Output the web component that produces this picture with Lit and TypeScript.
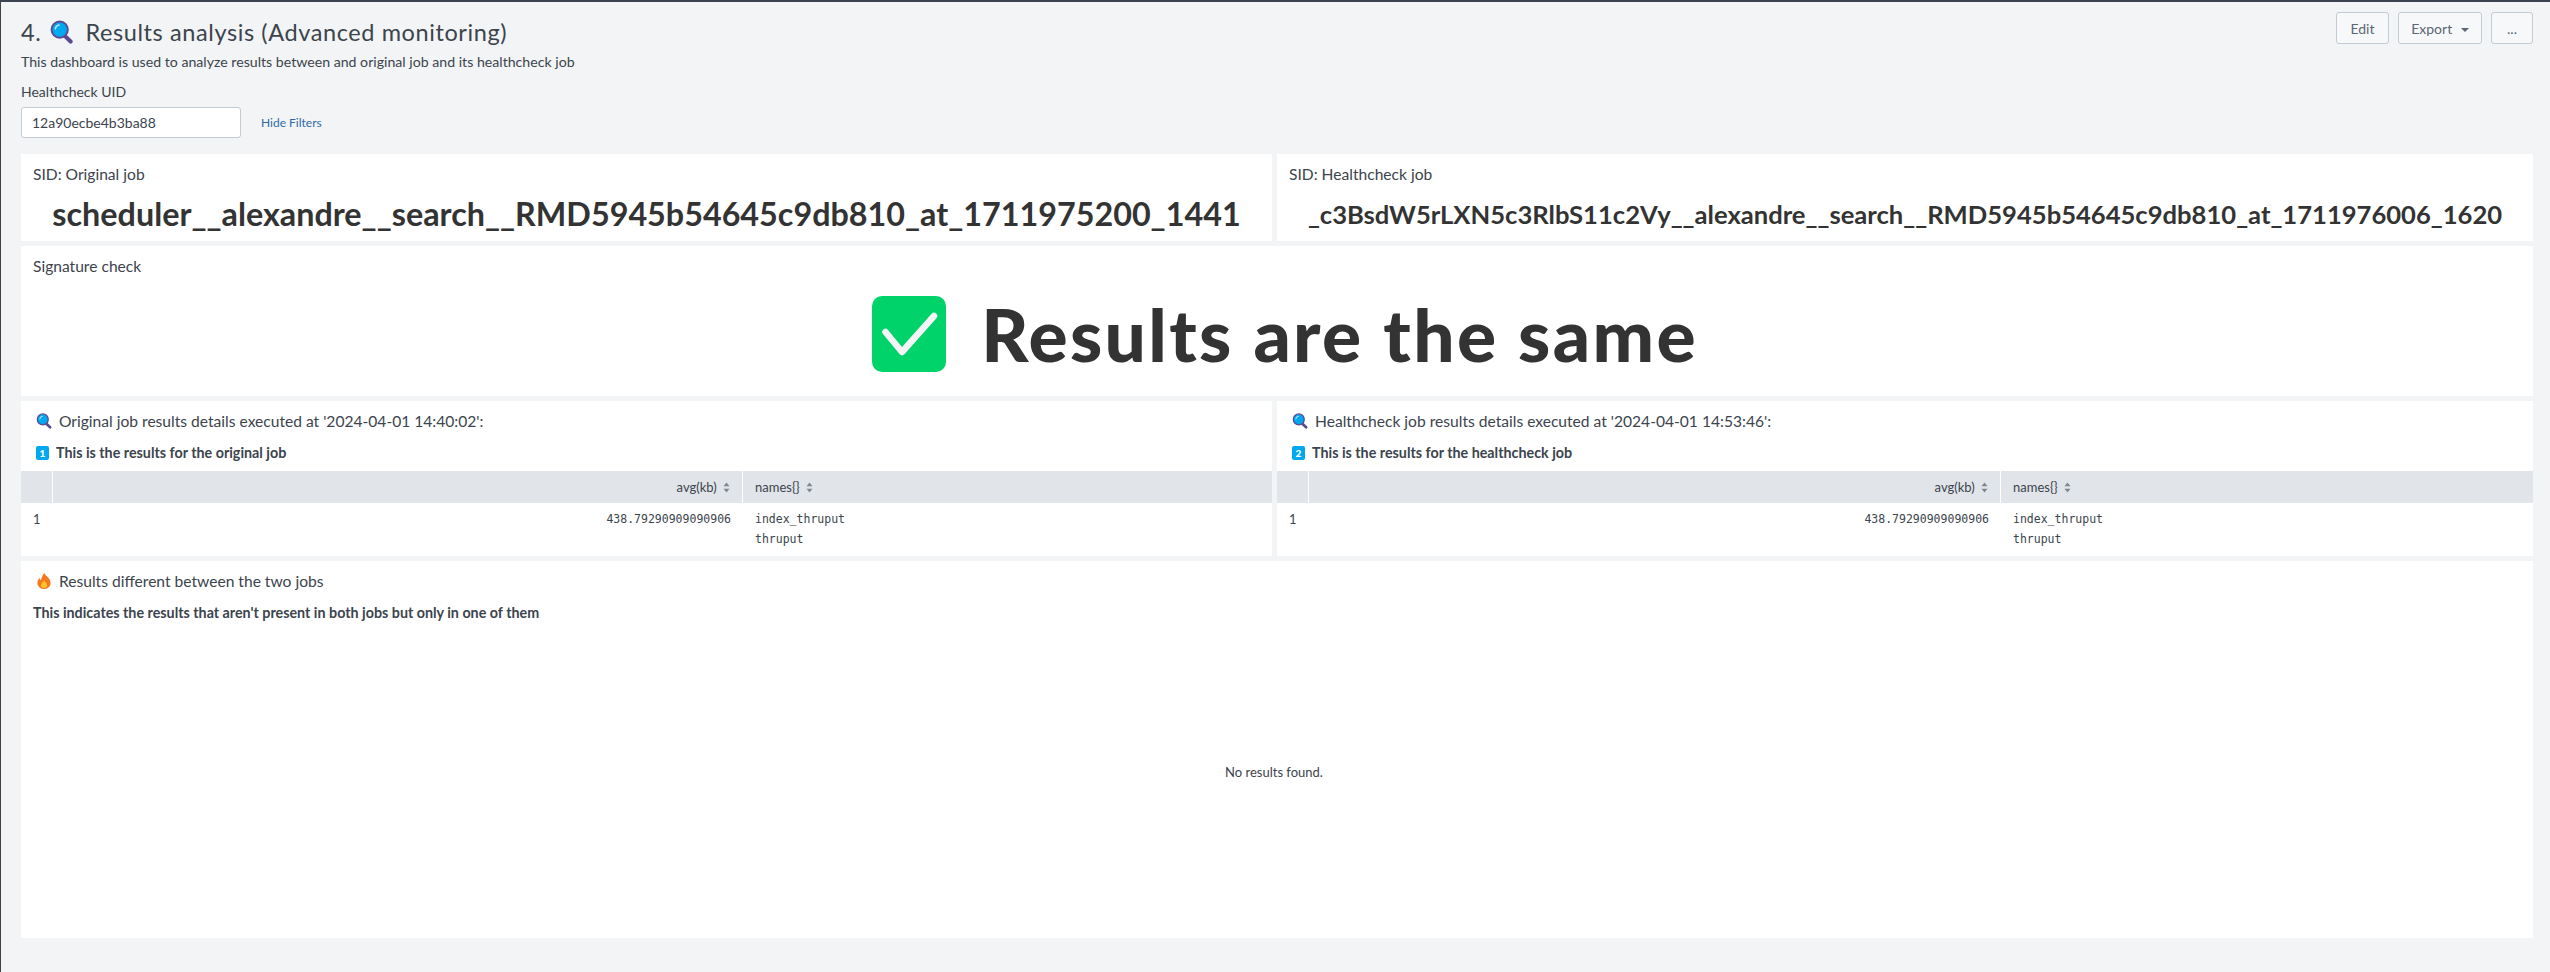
import { LitElement, css, html, svg } from 'lit'
import { customElement } from 'lit/decorators.js'

const magnifier = svg`
  <svg class="ico" viewBox="0 0 20 20">
    <path d="M12 12.5l5.6 5.4" stroke="#5c4b94" stroke-width="3.4" stroke-linecap="round" fill="none"/>
    <circle cx="8.5" cy="8" r="6.8" fill="#00a8f0" stroke="#5c4b94" stroke-width="1.6"/>
    <path d="M4.8 7.4a3.8 3.8 0 0 1 3.2-3.2" stroke="#b6e6fb" stroke-width="1.3" stroke-linecap="round" fill="none"/>
  </svg>`

const flame = svg`
  <svg class="ico flame" viewBox="0 0 14 16">
    <path d="M7.4 0c.4 2.700 6.200 4.800 6.200 10 0 3.500-2.900 6-6.600 6S.4 13.500.4 10.100c0-2.300 1.200-3.900 2.400-5 .2 1.100.6 1.900 1.300 2.300C4.300 4.600 5.600 2 7.400 0z" fill="#f4791f"/>
    <path d="M7.200 7.200c.4 1.500 3 2.500 3 5 0 1.800-1.400 2.900-3.200 2.900s-3.200-1.100-3.200-2.800c0-2.100 2.500-3.100 3.400-5.100z" fill="#ffc02e"/>
  </svg>`

const keycap = (n: string) => html`<span class="keycap">${n}</span>`

const sortIcon = svg`
  <svg class="sort" viewBox="0 0 7 11">
    <path d="M3.500 .5l3 3.800h-6z" fill="#7c8791"/>
    <path d="M3.500 10.500l-3-3.800h6z" fill="#7c8791"/>
  </svg>`

@customElement('app-root')
export class AppRoot extends LitElement {
  private resultTable(extra = '') {
    return html`
      <div class="table ${extra}">
        <div class="th"></div>
        <div class="th right">avg(kb) ${sortIcon}</div>
        <div class="th names">names{} ${sortIcon}</div>
        <div class="td">1</div>
        <div class="td mono right">438.79290909090906</div>
        <div class="td mono">
          <div>index_thruput</div>
          <div>thruput</div>
        </div>
      </div>
    `
  }

  render() {
    return html`
      <div class="head">
        <div>
          <h1>4. ${magnifier} <span>Results analysis (Advanced monitoring)</span></h1>
          <p class="desc">This dashboard is used to analyze results between and original job and its healthcheck job</p>
        </div>
        <div class="actions">
          <button class="edit">Edit</button>
          <button class="export">Export <i class="caret"></i></button>
          <button class="more">...</button>
        </div>
      </div>

      <div class="filters">
        <label>Healthcheck UID</label>
        <div class="filter-row">
          <div class="input">12a90ecbe4b3ba88</div>
          <a>Hide Filters</a>
        </div>
      </div>

      <div class="grid">
        <section>
          <div class="title">SID: Original job</div>
          <div class="big">scheduler__alexandre__search__RMD5945b54645c9db810_at_1711975200_1441</div>
        </section>
        <section>
          <div class="title">SID: Healthcheck job</div>
          <div class="big small">_c3BsdW5rLXN5c3RlbS11c2Vy__alexandre__search__RMD5945b54645c9db810_at_1711976006_1620</div>
        </section>

        <section class="wide">
          <div class="title">Signature check</div>
          <div class="verdict">
            <svg class="tick" viewBox="0 0 74 76">
              <rect width="74" height="76" rx="10" fill="#00d36a"/>
              <path d="M13.500 36L30 56 62 20" fill="none" stroke="#f2f4f5" stroke-width="6.500" stroke-linecap="round" stroke-linejoin="round"/>
            </svg>
            <span>Results are the same</span>
          </div>
        </section>

        <section>
          <div class="title indent">${magnifier} Original job results details executed at '2024-04-01 14:40:02':</div>
          <div class="note indent">${keycap('1')} This is the results for the original job</div>
          ${this.resultTable()}
        </section>
        <section>
          <div class="title indent">${magnifier} Healthcheck job results details executed at '2024-04-01 14:53:46':</div>
          <div class="note indent">${keycap('2')} This is the results for the healthcheck job</div>
          ${this.resultTable('wider')}
        </section>

        <section class="wide">
          <div class="title indent">${flame} Results different between the two jobs</div>
          <div class="note">This indicates the results that aren't present in both jobs but only in one of them</div>
          <div class="empty">No results found.</div>
        </section>
      </div>
    `
  }

  static styles = css`
    :host {
      display: block;
      box-sizing: border-box;
      height: 972px;
      background: #f2f4f5;
      border-top: 2px solid #3c444d;
      border-left: 1px solid #3c444d;
      padding: 0 17px 0 20px;
      font-family: Lato, 'Open Sans', sans-serif;
      color: #3c444d;
      font-size: 12px;
    }
    * {
      box-sizing: border-box;
    }
    .head {
      display: flex;
      justify-content: space-between;
      height: 82px;
      padding-top: 10px;
    }
    h1 {
      margin: 4px 0 0;
      height: 32px;
      display: flex;
      align-items: center;
      gap: 7px;
      font-size: 23.5px;
      font-weight: 400;
      letter-spacing: 0.6px;
    }
    h1 .ico {
      width: 25px;
      height: 24px;
      margin: 0 4px 0 1px;
    }
    .desc {
      margin: 6px 0 0;
      font-size: 14.15px;
      line-height: 16px;
    }
    .actions {
      display: flex;
      gap: 9px;
    }
    button {
      height: 32px;
      background: #f7f8fa;
      border: 1px solid #c3cbd4;
      border-radius: 3px;
      color: #5c6773;
      font: inherit;
      font-size: 14px;
      padding: 0;
    }
    .edit {
      width: 53px;
    }
    .export {
      width: 84px;
    }
    .more {
      width: 42px;
    }
    .caret {
      display: inline-block;
      margin-left: 5px;
      vertical-align: 2px;
      border: 4px solid transparent;
      border-top: 4px solid #5c6773;
      border-bottom: 0;
    }
    .filters label {
      display: block;
      font-size: 14px;
      line-height: 16px;
    }
    .filter-row {
      display: flex;
      align-items: center;
      gap: 20px;
      margin-top: 7px;
    }
    .input {
      width: 220px;
      height: 31px;
      padding: 0 10px;
      line-height: 29px;
      background: #fff;
      border: 1px solid #c3cbd4;
      border-radius: 3px;
      font-size: 14px;
    }
    a {
      color: #2f6ba8;
      font-size: 12px;
    }
    .grid {
      display: grid;
      grid-template-columns: 1251px 1256px;
      grid-template-rows: 87px 150px 155px 377px;
      gap: 5px;
      margin-top: 16px;
    }
    section {
      background: #fff;
      min-width: 0;
    }
    .wide {
      grid-column: 1 / -1;
    }
    .title {
      display: flex;
      align-items: center;
      gap: 7px;
      padding: 10px 12px 0;
      font-size: 15.6px;
      line-height: 20px;
    }
    .indent {
      padding-left: 15px;
    }
    .ico {
      width: 16px;
      height: 16px;
      flex: none;
    }
    .flame {
      width: 14px;
      margin: 0 1px;
    }
    .big {
      text-align: center;
      font-size: 32.3px;
      font-weight: 700;
      color: #333;
      white-space: nowrap;
      margin-top: 10px;
    }
    .big.small {
      font-size: 25.6px;
      margin-top: 15px;
    }
    .verdict {
      display: flex;
      justify-content: center;
      align-items: center;
      gap: 35px;
      margin-top: 20px;
      padding-left: 16px;
      font-size: 73px;
      font-weight: 900;
      letter-spacing: 2.35px;
      color: #333;
      line-height: 76px;
    }
    .tick {
      width: 74px;
      height: 76px;
      flex: none;
    }
    .note {
      display: flex;
      align-items: center;
      gap: 7px;
      padding: 14px 12px 0;
      font-size: 14.3px;
      font-weight: 700;
      line-height: 16px;
    }
    .note.indent {
      padding-left: 15px;
    }
    .keycap {
      width: 13px;
      height: 14px;
      border-radius: 2px;
      background: #00a8f0;
      color: #fff;
      font-size: 10px;
      font-weight: 900;
      line-height: 14px;
      text-align: center;
    }
    .table {
      display: grid;
      grid-template-columns: 32px 1fr 529px;
      margin-top: 10px;
    }
    .table.wider {
      grid-template-columns: 32px 1fr 532px;
    }
    .th {
      height: 32px;
      line-height: 32px;
      padding: 0 8px;
      background: #e1e5e9;
      border-right: 1px solid #fff;
      font-size: 13px;
    }
    .th.names {
      border-right: 0;
      padding-left: 12px;
    }
    .sort {
      width: 7px;
      height: 11px;
      margin-left: 3px;
      vertical-align: -1px;
    }
    .td {
      padding: 6px 12px 0;
      font-size: 13px;
      line-height: 20px;
    }
    .mono {
      font-family: 'DejaVu Sans Mono', monospace;
      font-size: 11.5px;
    }
    .right {
      text-align: right;
    }
    .th.right {
      padding-right: 12px;
    }
    .empty {
      text-align: center;
      margin-top: 143px;
      padding-right: 6px;
      font-size: 13px;
      line-height: 16px;
    }
  `
}
